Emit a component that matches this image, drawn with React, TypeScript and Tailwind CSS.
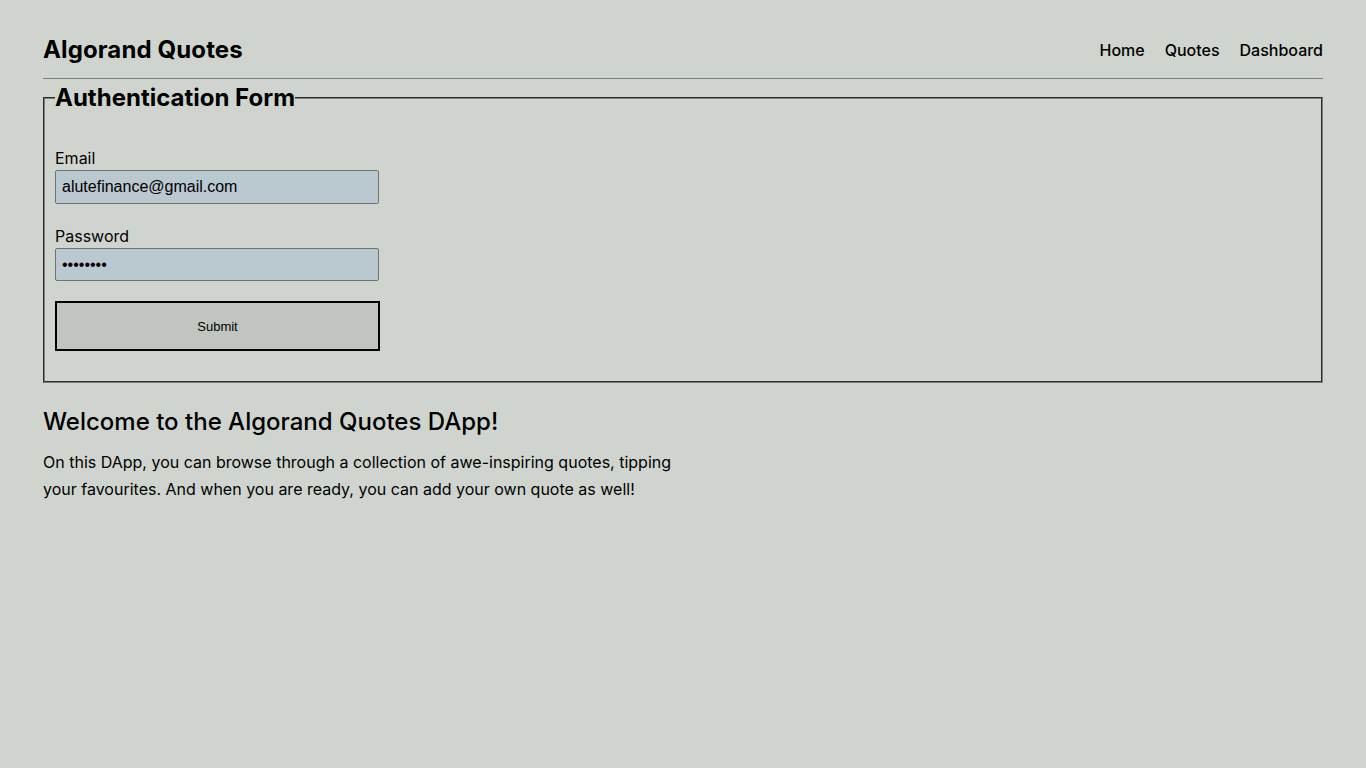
export default function App() {
  return (
    <div className="min-h-screen bg-[#cfd5ce] text-black" style={{ fontFamily: "Inter, 'Noto Sans', sans-serif" }}>
      <div className="mx-auto w-[1280px]">
        <header className="flex items-center justify-between pt-[34px] pb-3 border-b border-[#7c827c]">
          <h1 className="text-2xl leading-8 font-bold tracking-[0.005em]">Algorand Quotes</h1>
          <nav className="flex gap-5 text-base font-medium">
            <a href="#">Home</a>
            <a href="#">Quotes</a>
            <a href="#">Dashboard</a>
          </nav>
        </header>

        <fieldset className="mt-[3px] border-2 [border-style:groove] border-[#7a807a] px-2.5 pb-[30px]">
          <legend className="text-2xl leading-8 font-bold">Authentication Form</legend>
          <form className="mt-8 flex flex-col w-[325px]" onSubmit={(e) => e.preventDefault()}>
            <label className="text-base leading-6">Email</label>
            <input
              type="email"
              defaultValue="alutefinance@gmail.com"
              className="h-[34px] w-[324px] border border-[#6f746f] rounded-[2px] bg-[#bac8cf] px-[6px] text-base outline-none"
              style={{ fontFamily: "'Liberation Sans', Arial, sans-serif" }}
            />
            <label className="mt-5 text-base leading-6">Password</label>
            <input
              type="password"
              defaultValue="password"
              className="h-[33px] w-[324px] border border-[#6f746f] rounded-[2px] bg-[#bac8cf] px-[6px] text-base outline-none"
              style={{ fontFamily: "'Liberation Sans', Arial, sans-serif" }}
            />
            <button
              type="submit"
              className="mt-5 h-[50px] w-[325px] border-2 border-black bg-[#c0c6bf] pt-[2px] text-[13px]"
              style={{ fontFamily: "'Liberation Sans', Arial, sans-serif" }}
            >
              Submit
            </button>
          </form>
        </fieldset>

        <section className="mt-[23px]">
          <h2 className="text-2xl leading-8 font-medium">Welcome to the Algorand Quotes DApp!</h2>
          <p className="mt-[11px] w-[640px] text-base leading-[27px]">
            On this DApp, you can browse through a collection of awe-inspiring quotes, tipping your favourites. And when you are ready, you can add your own quote as well!
          </p>
        </section>
      </div>
    </div>
  );
}
